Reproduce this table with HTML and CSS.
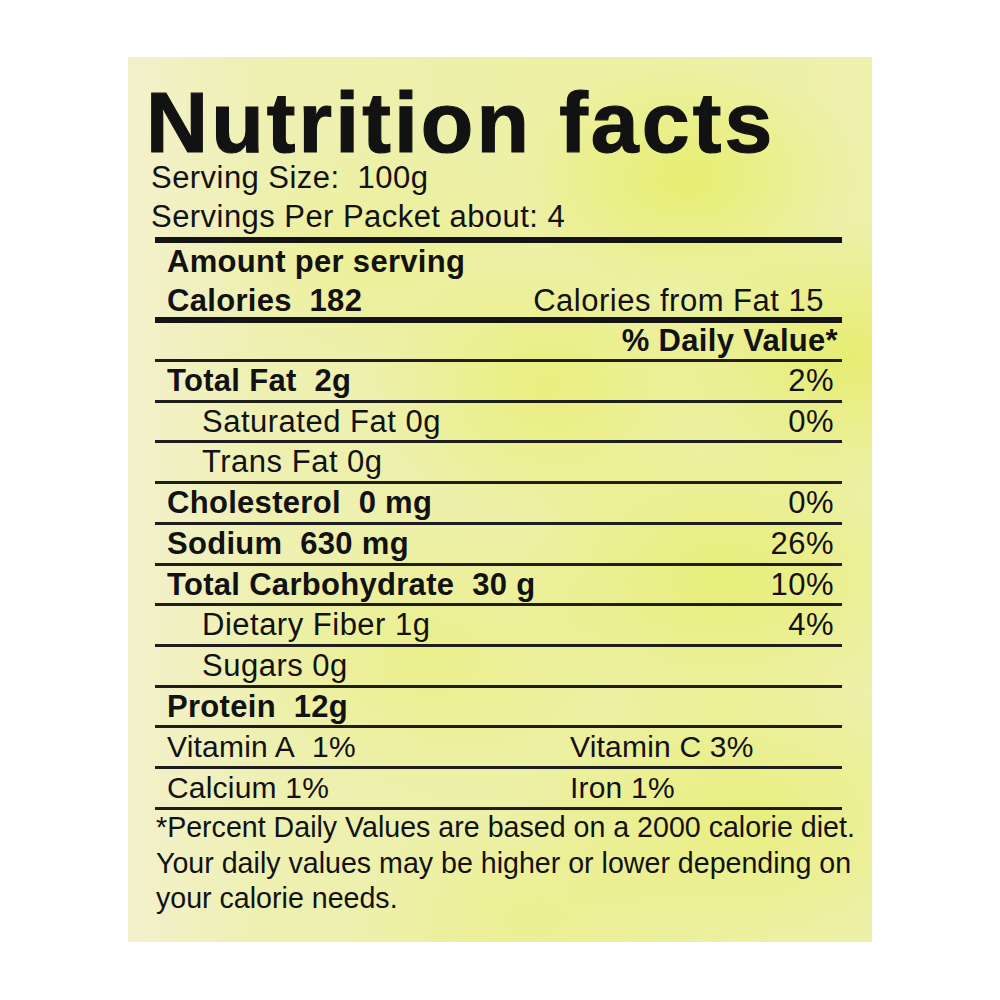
FILE: index.html
```html
<!DOCTYPE html>
<html>
<head>
<meta charset="utf-8">
<link rel="stylesheet" href="styles.css">
</head>
<body>
<div class="panel">
  <h1 class="title">Nutrition facts</h1>
  <div class="serving">Serving Size:&nbsp; 100g</div>
  <div class="serving">Servings Per Packet about: 4</div>
  <div class="rule-thick"></div>
  <div class="row row-amount"><span class="b">Amount per serving</span></div>
  <div class="row row-cal"><span class="b">Calories&nbsp; 182</span><span class="calfat">Calories from Fat 15</span></div>
  <div class="rule-thick"></div>
  <div class="row row-dv"><span></span><span class="b">% Daily Value*</span></div>
  <div class="row line"><span class="b">Total Fat&nbsp; 2g</span><span>2%</span></div>
  <div class="row line sub"><span>Saturated Fat 0g</span><span>0%</span></div>
  <div class="row line sub"><span>Trans Fat 0g</span><span></span></div>
  <div class="row line"><span class="b">Cholesterol&nbsp; 0 mg</span><span>0%</span></div>
  <div class="row line"><span class="b">Sodium&nbsp; 630 mg</span><span>26%</span></div>
  <div class="row line"><span class="b">Total Carbohydrate&nbsp; 30 g</span><span>10%</span></div>
  <div class="row line sub"><span>Dietary Fiber 1g</span><span>4%</span></div>
  <div class="row line sub"><span>Sugars 0g</span><span></span></div>
  <div class="row line"><span class="b">Protein&nbsp; 12g</span><span></span></div>
  <div class="row line vit"><span>Vitamin A&nbsp; 1%</span><span>Vitamin C 3%</span></div>
  <div class="row line vit"><span>Calcium 1%</span><span>Iron 1%</span></div>
  <p class="note">*Percent Daily Values are based on a 2000 calorie diet.<br>Your daily values may be higher or lower depending on<br>your calorie needs.</p>
</div>
</body>
</html>
```
FILE: styles.css
```css
html, body {
  margin: 0;
  padding: 0;
  background: #ffffff;
}

body {
  font-family: "Liberation Sans", Arial, sans-serif;
  color: #121212;
}

.panel {
  box-sizing: border-box;
  width: 744px;
  height: 885px;
  margin: 57px 0 0 128px;
  padding: 30px 30px 0 27px;
  overflow: hidden;
  background:
    radial-gradient(ellipse 170px 120px at 560px 120px, rgba(230, 237, 100, 0.8), rgba(230, 237, 100, 0) 100%),
    radial-gradient(ellipse 200px 140px at 720px 300px, rgba(228, 236, 95, 0.75), rgba(228, 236, 95, 0) 100%),
    radial-gradient(ellipse 180px 130px at 420px 330px, rgba(232, 238, 110, 0.7), rgba(232, 238, 110, 0) 100%),
    radial-gradient(ellipse 220px 150px at 600px 520px, rgba(230, 237, 102, 0.7), rgba(230, 237, 102, 0) 100%),
    radial-gradient(ellipse 200px 140px at 300px 600px, rgba(234, 239, 120, 0.6), rgba(234, 239, 120, 0) 100%),
    radial-gradient(ellipse 230px 150px at 620px 760px, rgba(231, 237, 105, 0.65), rgba(231, 237, 105, 0) 100%),
    radial-gradient(ellipse 160px 120px at 250px 200px, rgba(236, 239, 130, 0.55), rgba(236, 239, 130, 0) 100%),
    radial-gradient(ellipse 180px 110px at 400px 860px, rgba(234, 238, 125, 0.5), rgba(234, 238, 125, 0) 100%),
    linear-gradient(90deg, #f3f1cc 0%, #eef0b2 18%, #edf0a4 60%, #eef0ac 100%);
}

.title {
  margin: 0 0 0 -9px;
  font-size: 86px;
  line-height: 71px;
  font-weight: bold;
  letter-spacing: 3.1px;
  white-space: nowrap;
  -webkit-text-stroke: 1.2px #121212;
}

.serving {
  margin-left: -4px;
  font-size: 31px;
  line-height: 39px;
  letter-spacing: 0.45px;
  white-space: nowrap;
}

.rule-thick {
  height: 6px;
  background: #141414;
}

.serving + .serving + .rule-thick {
  margin-top: 1px;
}

.row {
  display: flex;
  justify-content: space-between;
  padding: 0 8px 0 12px;
  font-size: 31px;
  line-height: 37.7px;
  letter-spacing: 0.5px;
  white-space: nowrap;
}

.b {
  font-weight: bold;
  letter-spacing: 0.3px;
}

.row-amount {
  line-height: 38px;
}

.row-cal {
  line-height: 40px;
  margin-bottom: -4px;
}

.calfat {
  margin-right: 10px;
}

.row-dv {
  line-height: 36px;
  padding-right: 4px;
  border-bottom: 3px solid #1e1e1e;
}

.line {
  border-bottom: 3px solid #1e1e1e;
}

.sub {
  padding-left: 47px;
}

.vit {
  display: grid;
  grid-template-columns: 403px 1fr;
  font-size: 30px;
  letter-spacing: 0.2px;
}

.note {
  margin: 0 -20px 0 1px;
  font-size: 28.6px;
  line-height: 35.8px;
  white-space: nowrap;
}
```
